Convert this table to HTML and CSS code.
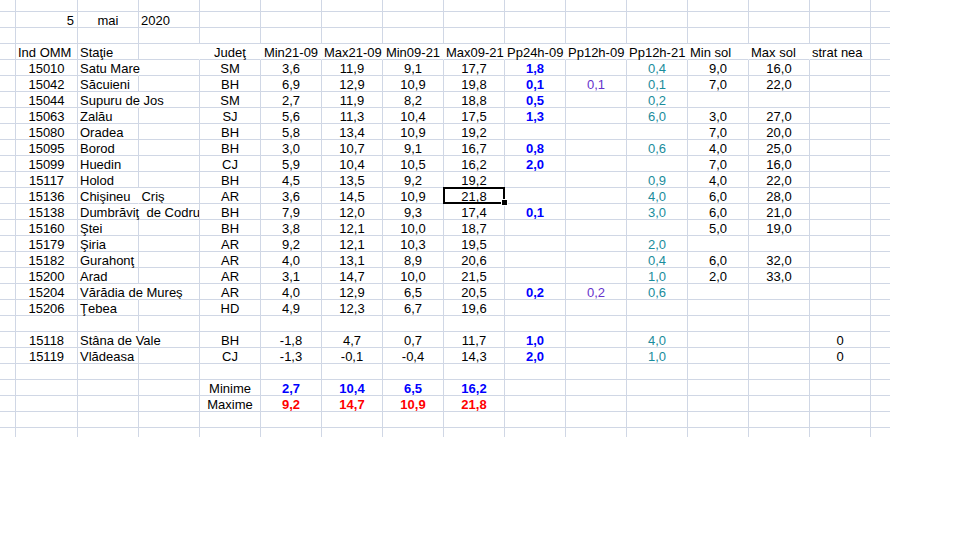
FILE: index.html
```html
<!DOCTYPE html>
<html lang="ro">
<head>
<meta charset="utf-8">
<title>Foaie</title>
<link rel="stylesheet" href="styles.css">
</head>
<body>
<div class="sheet">
  <div class="row top"><div></div><div></div><div></div><div></div><div></div><div></div><div></div><div></div><div></div><div></div><div></div><div></div><div></div><div></div><div></div><div></div></div>
  <div class="row"><div></div><div class="r">5</div><div>mai</div><div class="l">2020</div><div></div><div></div><div></div><div></div><div></div><div></div><div></div><div></div><div></div><div></div><div></div><div></div></div>
  <div class="row"><div></div><div></div><div></div><div></div><div></div><div></div><div></div><div></div><div></div><div></div><div></div><div></div><div></div><div></div><div></div><div></div></div>
  <div class="row hd"><div></div><div class="l">Ind OMM</div><div class="l">Staţie</div><div></div><div>Judeţ</div><div>Min21-09</div><div>Max21-09</div><div>Min09-21</div><div>Max09-21</div><div>Pp24h-09</div><div>Pp12h-09</div><div>Pp12h-21</div><div class="l">Min sol</div><div class="l">Max sol</div><div class="l">strat nea</div><div></div></div>
  <div class="row"><div></div><div>15010</div><div class="l ov">Satu Mare</div><div></div><div>SM</div><div>3,6</div><div>11,9</div><div>9,1</div><div>17,7</div><div class="b">1,8</div><div></div><div class="t">0,4</div><div>9,0</div><div>16,0</div><div></div><div></div></div>
  <div class="row"><div></div><div>15042</div><div class="l">Săcuieni</div><div></div><div>BH</div><div>6,9</div><div>12,9</div><div>10,9</div><div>19,8</div><div class="b">0,1</div><div class="p">0,1</div><div class="t">0,1</div><div>7,0</div><div>22,0</div><div></div><div></div></div>
  <div class="row"><div></div><div>15044</div><div class="l ov">Supuru de Jos</div><div></div><div>SM</div><div>2,7</div><div>11,9</div><div>8,2</div><div>18,8</div><div class="b">0,5</div><div></div><div class="t">0,2</div><div></div><div></div><div></div><div></div></div>
  <div class="row"><div></div><div>15063</div><div class="l">Zalău</div><div></div><div>SJ</div><div>5,6</div><div>11,3</div><div>10,4</div><div>17,5</div><div class="b">1,3</div><div></div><div class="t">6,0</div><div>3,0</div><div>27,0</div><div></div><div></div></div>
  <div class="row"><div></div><div>15080</div><div class="l">Oradea</div><div></div><div>BH</div><div>5,8</div><div>13,4</div><div>10,9</div><div>19,2</div><div></div><div></div><div></div><div>7,0</div><div>20,0</div><div></div><div></div></div>
  <div class="row"><div></div><div>15095</div><div class="l">Borod</div><div></div><div>BH</div><div>3,0</div><div>10,7</div><div>9,1</div><div>16,7</div><div class="b">0,8</div><div></div><div class="t">0,6</div><div>4,0</div><div>25,0</div><div></div><div></div></div>
  <div class="row"><div></div><div>15099</div><div class="l">Huedin</div><div></div><div>CJ</div><div>5,9</div><div>10,4</div><div>10,5</div><div>16,2</div><div class="b">2,0</div><div></div><div></div><div>7,0</div><div>16,0</div><div></div><div></div></div>
  <div class="row"><div></div><div>15117</div><div class="l">Holod</div><div></div><div>BH</div><div>4,5</div><div>13,5</div><div>9,2</div><div>19,2</div><div></div><div></div><div class="t">0,9</div><div>4,0</div><div>22,0</div><div></div><div></div></div>
  <div class="row"><div></div><div>15136</div><div class="l ov">Chişineu   Criş</div><div></div><div>AR</div><div>3,6</div><div>14,5</div><div>10,9</div><div class="sel">21,8</div><div></div><div></div><div class="t">4,0</div><div>6,0</div><div>28,0</div><div></div><div></div></div>
  <div class="row"><div></div><div>15138</div><div class="l ov">Dumbrăviţ  de Codru</div><div></div><div>BH</div><div>7,9</div><div>12,0</div><div>9,3</div><div>17,4</div><div class="b">0,1</div><div></div><div class="t">3,0</div><div>6,0</div><div>21,0</div><div></div><div></div></div>
  <div class="row"><div></div><div>15160</div><div class="l">Ştei</div><div></div><div>BH</div><div>3,8</div><div>12,1</div><div>10,0</div><div>18,7</div><div></div><div></div><div></div><div>5,0</div><div>19,0</div><div></div><div></div></div>
  <div class="row"><div></div><div>15179</div><div class="l">Şiria</div><div></div><div>AR</div><div>9,2</div><div>12,1</div><div>10,3</div><div>19,5</div><div></div><div></div><div class="t">2,0</div><div></div><div></div><div></div><div></div></div>
  <div class="row"><div></div><div>15182</div><div class="l">Gurahonţ</div><div></div><div>AR</div><div>4,0</div><div>13,1</div><div>8,9</div><div>20,6</div><div></div><div></div><div class="t">0,4</div><div>6,0</div><div>32,0</div><div></div><div></div></div>
  <div class="row"><div></div><div>15200</div><div class="l">Arad</div><div></div><div>AR</div><div>3,1</div><div>14,7</div><div>10,0</div><div>21,5</div><div></div><div></div><div class="t">1,0</div><div>2,0</div><div>33,0</div><div></div><div></div></div>
  <div class="row"><div></div><div>15204</div><div class="l ov">Vărădia de Mureş</div><div></div><div>AR</div><div>4,0</div><div>12,9</div><div>6,5</div><div>20,5</div><div class="b">0,2</div><div class="p">0,2</div><div class="t">0,6</div><div></div><div></div><div></div><div></div></div>
  <div class="row"><div></div><div>15206</div><div class="l">Ţebea</div><div></div><div>HD</div><div>4,9</div><div>12,3</div><div>6,7</div><div>19,6</div><div></div><div></div><div></div><div></div><div></div><div></div><div></div></div>
  <div class="row"><div></div><div></div><div></div><div></div><div></div><div></div><div></div><div></div><div></div><div></div><div></div><div></div><div></div><div></div><div></div><div></div></div>
  <div class="row"><div></div><div>15118</div><div class="l ov">Stâna de Vale</div><div></div><div>BH</div><div>-1,8</div><div>4,7</div><div>0,7</div><div>11,7</div><div class="b">1,0</div><div></div><div class="t">4,0</div><div></div><div></div><div>0</div><div></div></div>
  <div class="row"><div></div><div>15119</div><div class="l">Vlădeasa</div><div></div><div>CJ</div><div>-1,3</div><div>-0,1</div><div>-0,4</div><div>14,3</div><div class="b">2,0</div><div></div><div class="t">1,0</div><div></div><div></div><div>0</div><div></div></div>
  <div class="row"><div></div><div></div><div></div><div></div><div></div><div></div><div></div><div></div><div></div><div></div><div></div><div></div><div></div><div></div><div></div><div></div></div>
  <div class="row"><div></div><div></div><div></div><div></div><div>Minime</div><div class="b">2,7</div><div class="b">10,4</div><div class="b">6,5</div><div class="b">16,2</div><div></div><div></div><div></div><div></div><div></div><div></div><div></div></div>
  <div class="row"><div></div><div></div><div></div><div></div><div>Maxime</div><div class="m">9,2</div><div class="m">14,7</div><div class="m">10,9</div><div class="m">21,8</div><div></div><div></div><div></div><div></div><div></div><div></div><div></div></div>
  <div class="row"><div></div><div></div><div></div><div></div><div></div><div></div><div></div><div></div><div></div><div></div><div></div><div></div><div></div><div></div><div></div><div></div></div>
  <div class="row end"><div></div><div></div><div></div><div></div><div></div><div></div><div></div><div></div><div></div><div></div><div></div><div></div><div></div><div></div><div></div><div></div></div>
</div>
</body>
</html>
```

FILE: styles.css
```css
html, body {
  margin: 0;
  padding: 0;
  background: #ffffff;
}

body {
  font-family: "Liberation Sans", Arial, sans-serif;
  font-size: 13px;
  color: #000000;
}

.sheet {
  width: 890px;
}

.row {
  display: grid;
  grid-template-columns: 16px 62px repeat(13, 61px) 19px;
  height: 16px;
}

.row > div {
  box-sizing: border-box;
  height: 16px;
  border-right: 1px solid #d0d7e5;
  border-bottom: 1px solid #d0d7e5;
  padding: 1px 2px 0 2px;
  line-height: 15px;
  text-align: center;
  white-space: pre;
  overflow: visible;
}

.row > div:last-child {
  border-right: none;
}

.row.top,
.row.top > div {
  height: 12px;
}

.row.end,
.row.end > div {
  height: 9px;
}

.row.end > div {
  border-bottom: none;
}

.row.hd > div:nth-child(n+4):nth-child(-n+14) {
  border-right-color: transparent;
}

.row > div.l {
  text-align: left;
}

.row > div.r {
  text-align: right;
  padding-right: 3px;
}

.row > div.ov {
  border-right-color: transparent;
}

.b {
  color: #0000ff;
  font-weight: bold;
}

.m {
  color: #ff0000;
  font-weight: bold;
}

.p {
  color: #6633cc;
}

.t {
  color: #1a8c9c;
}

.row > div.sel {
  position: relative;
}

.sel::before {
  content: "";
  position: absolute;
  left: -1px;
  top: -1px;
  width: 62px;
  height: 17px;
  box-sizing: border-box;
  border: 2px solid #000000;
}

.sel::after {
  content: "";
  position: absolute;
  left: 58px;
  top: 12px;
  width: 5px;
  height: 5px;
  box-sizing: border-box;
  background: #000000;
  outline: 1px solid #ffffff;
}
```
